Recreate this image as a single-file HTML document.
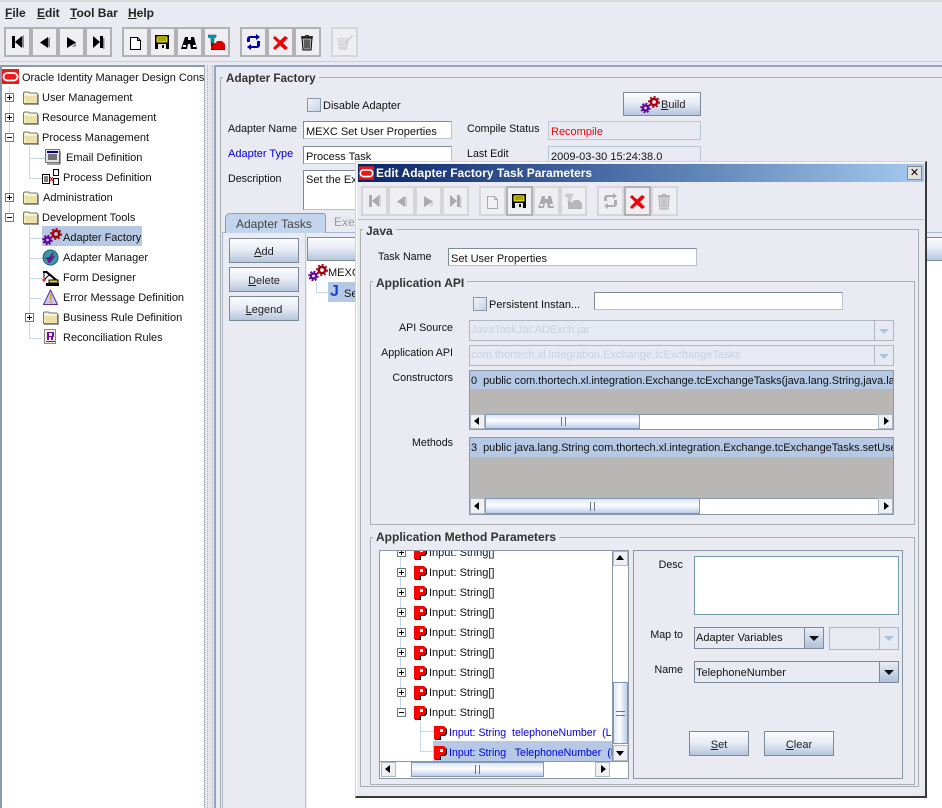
<!DOCTYPE html>
<html><head><meta charset="utf-8"><title>Edit Adapter Factory Task Parameters</title>
<style>
html,body{margin:0;padding:0;width:942px;height:808px;overflow:hidden;background:#eaeaf2}
body{position:relative;font:11px "Liberation Sans",sans-serif;color:#111}
div,span,svg{position:absolute;box-sizing:border-box}
u{text-decoration:underline}
.t{white-space:nowrap;line-height:14px}
.l{font-size:10.7px}
.r{text-align:right}
.m{font-weight:bold;font-size:12px;color:#222;top:6px;line-height:14px}
.tb{width:27px;height:30px;border:2px solid #b2b2b4;background:#eeeef3}
.tb svg{left:3px;top:3px;width:17px;height:20px}
.off svg{opacity:.28;filter:grayscale(1)}
.off{border-color:#d6d6da}
.g{border:1px solid #a9b0b0}
.gl{font-weight:bold;font-size:12px;color:#333;background:#eaeaf2;padding:0 3px;line-height:14px;white-space:nowrap}
.in{background:#fff;border:1px solid #7d8b99;border-right-color:#b9c2cc;border-bottom-color:#b9c2cc;padding:3px 0 0 2px;line-height:14px;white-space:nowrap;overflow:hidden}
.ro{background:#e8eaf3;border:1px solid #b8c5d3;padding:3px 0 0 2px;line-height:14px;white-space:nowrap}
.btn{border:1px solid #7c8a98;background:linear-gradient(#fbfcfe 0%,#e8ecf5 45%,#b6c6dc 100%);text-align:center;line-height:26px;color:#222}
.sel{background:#b5c9e4}
.sbt{background:linear-gradient(#dbe6f6,#fcfdff 45%,#bccde8);border:1px solid #7f96bd}
.ar{background:#eef0f6;border:1px solid #b0b8c2}
.cb{width:14px;height:14px;border:1px solid #8a98a8;background:linear-gradient(135deg,#f3f5fa,#c4d2e6)}
.pm{width:9px;height:9px;border:1px solid #777;background:#fff}
.pm:before{content:"";position:absolute;left:1px;top:3px;width:5px;height:1px;background:#000}
.pl:after{content:"";position:absolute;left:3px;top:1px;width:1px;height:5px;background:#000}
.cbx{background:#e8eaf3;border:1px solid #7d8b99}
.cbb{background:linear-gradient(#e8ecf5,#b0c1da);border-left:1px solid #7d8b99;top:0;bottom:0;right:0;width:19px}
.cbb:after{content:"";position:absolute;left:4px;top:8px;border:5px solid transparent;border-top:5px solid #111;border-bottom:0}
.dis{border-color:#b0b7c0}
.dis .cbb{background:#e8eaf3;border-left-color:#b0b7c0}
.dis .cbb:after{border-top-color:#a9c3e3}
.blue{color:#0000e0;font-size:10.6px}
.gd{background:#c3d8ea}
</style></head><body>
<svg width="0" height="0" style="left:0;top:0"><defs>
<symbol id="folder" viewBox="0 0 17 14"><path d="M1.500 3.500V2.500l1-1h4l1 1h7l1 1v9.500h-14z" fill="#f7f1c4" stroke="#77776a"/><path d="M2 5h13v7L4 12.500z" fill="#ebe1a8"/><path d="M2 4.500h13" stroke="#fff"/><path d="M16.500 4v10H2" stroke="#999" fill="none"/></symbol>
<symbol id="gear" viewBox="0 0 20 18"><circle cx="14" cy="6" r="3.200" fill="none" stroke="#a3000f" stroke-width="2.600"/><circle cx="14" cy="6" r="5.200" fill="none" stroke="#a3000f" stroke-width="1.500" stroke-dasharray="2 2"/><circle cx="5.500" cy="12" r="2.600" fill="none" stroke="#660099" stroke-width="2.400"/><circle cx="5.500" cy="12" r="4.500" fill="none" stroke="#660099" stroke-width="1.500" stroke-dasharray="2 1.500"/></symbol>
<symbol id="P" viewBox="0 0 13 14"><path d="M1 1h10l2 2v5l-2 2H7v4H1z" fill="#000"/><path d="M0 0h10l2 2v5l-2 2H6v4H0z" fill="#f00"/><path d="M6 3h3v3H6z" fill="#fff"/></symbol>
<symbol id="first" viewBox="0 0 17 20"><path d="M6 9.500l9-6.500v13z" fill="#888"/><path d="M3 4h3v12H3zM13 4v12L6 10z" fill="#000"/></symbol>
<symbol id="prev" viewBox="0 0 17 20"><path d="M7 10.500l7-5.500v11z" fill="#888"/><path d="M12 5v11L4 10.500z" fill="#000"/></symbol>
<symbol id="next" viewBox="0 0 17 20"><path d="M4 5v11l9-5.500z" fill="#000"/><path d="M9 15l4-4.500v4z" fill="#888"/></symbol>
<symbol id="last" viewBox="0 0 17 20"><path d="M3 4v12l7-6zM10 4h3v12h-3z" fill="#000"/><path d="M13 6h1.500v11H13z" fill="#888"/></symbol>
<symbol id="new" viewBox="0 0 17 20"><path d="M3.500 5.500h7l3 3v9h-10z" fill="#fff" stroke="#000"/><path d="M10.500 5.500v3h3" fill="none" stroke="#000"/></symbol>
<symbol id="save" viewBox="0 0 17 20"><path d="M1 3h14v14H1z" fill="#000"/><path d="M2.500 4.500h11v6h-11z" fill="#d8cc10"/><path d="M4 4h8v5H4z" fill="#a8a400"/><path d="M4 12h8v5H4z" fill="#e8e8e8"/><path d="M8 13h2v3H8z" fill="#000"/></symbol>
<symbol id="bino" viewBox="0 0 17 20"><path d="M4 5h3v3h3V5h3l3 12h-6l-1-5H7l-1 5H0z" fill="#000"/><path d="M2 13h3v2H2zM12 13h3v2h-3z" fill="#fff"/></symbol>
<symbol id="pin" viewBox="0 0 17 20"><path d="M3 11h5l1-2h5l3 3v6H3z" fill="#e00000"/><path d="M3 17h14v1H3z" fill="#600"/><path d="M0 3h8v2L6 6v4l-1 1H3V6L0 5z" fill="#00a0a8" stroke="#005060" stroke-width=".6"/><path d="M3.500 11h1v3h-1z" fill="#000"/></symbol>
<symbol id="ref" viewBox="0 0 17 20"><path d="M2 10V6l2-2h7V2l4 3-4 3V6H5v4z" fill="#0000b0"/><path d="M15 9v5l-2 2H6v2l-4-3 4-3v2h6V9z" fill="#0000b0"/></symbol>
<symbol id="x" viewBox="0 0 17 20"><path d="M1 6l2-2 5 4.500L13 4l3 2-5 5 5 5-3 2-5-4.500L3 18l-2-2 5-5z" fill="#f00000"/></symbol>
<symbol id="trash" viewBox="0 0 17 20"><path d="M3 6h10l-1 12H4z" fill="#b8b8b8" stroke="#000"/><path d="M2 4h12v1.500H2zM6 3h4v1H6z" fill="#333"/><path d="M6 7.500v9M8 7.500v9M10 7.500v9" stroke="#000"/></symbol>
<symbol id="note" viewBox="0 0 17 20"><path d="M1 6h12l-2 12H3z" fill="#999"/><path d="M2 8h9M2 11h9M3 14h7" stroke="#ddd"/><path d="M9 11l7-8 1 1-7 8z" fill="#777"/></symbol>
<symbol id="oracle" viewBox="0 0 17 15"><path d="M0 0h17v15H0z" fill="#e81b1b"/><rect x="1.500" y="4" width="14" height="7.500" rx="3.700" fill="none" stroke="#fff" stroke-width="1.800"/></symbol>
</defs></svg>

<!-- menu -->
<div style="left:0;top:0;width:942px;height:2px;background:#d8d8db"></div>
<div class="m t" style="left:5px"><u>F</u>ile</div>
<div class="m t" style="left:37px"><u>E</u>dit</div>
<div class="m t" style="left:70px"><u>T</u>ool Bar</div>
<div class="m t" style="left:128px"><u>H</u>elp</div>

<!-- toolbar -->
<div class="tb" style="left:4px;top:27px"><svg><use href="#first"/></svg></div>
<div class="tb" style="left:31px;top:27px"><svg><use href="#prev"/></svg></div>
<div class="tb" style="left:58px;top:27px"><svg><use href="#next"/></svg></div>
<div class="tb" style="left:85px;top:27px"><svg><use href="#last"/></svg></div>
<div class="tb" style="left:122px;top:27px"><svg><use href="#new"/></svg></div>
<div class="tb" style="left:149px;top:27px"><svg><use href="#save"/></svg></div>
<div class="tb" style="left:176px;top:27px"><svg><use href="#bino"/></svg></div>
<div class="tb" style="left:203px;top:27px"><svg><use href="#pin"/></svg></div>
<div class="tb" style="left:240px;top:27px"><svg><use href="#ref"/></svg></div>
<div class="tb" style="left:267px;top:27px"><svg><use href="#x"/></svg></div>
<div class="tb" style="left:294px;top:27px"><svg><use href="#trash"/></svg></div>
<div class="tb off" style="left:331px;top:27px"><svg><use href="#note"/></svg></div>
<div style="left:0;top:61px;width:942px;height:1px;background:#cfcfd3"></div>

<!-- left tree -->
<div style="left:0;top:65px;width:205px;height:743px;background:#fff;border-top:2px solid #8c9bac;border-left:2px solid #8c9bac;border-right:1px solid #a8b1b9"></div>
<div style="left:0;top:1px">
<div class="gd" style="left:9px;top:85px;width:1px;height:135px"></div>
<div class="gd" style="left:29px;top:145px;width:1px;height:33px"></div>
<div class="gd" style="left:29px;top:225px;width:1px;height:113px"></div>
<div class="gd" style="left:29px;top:157px;width:16px;height:1px"></div>
<div class="gd" style="left:29px;top:177px;width:13px;height:1px"></div>
<div class="gd" style="left:29px;top:237px;width:13px;height:1px"></div>
<div class="gd" style="left:29px;top:257px;width:13px;height:1px"></div>
<div class="gd" style="left:29px;top:277px;width:13px;height:1px"></div>
<div class="gd" style="left:29px;top:297px;width:13px;height:1px"></div>
<div class="gd" style="left:29px;top:337px;width:13px;height:1px"></div>
<svg style="left:2px;top:68px" width="17" height="15"><use href="#oracle"/></svg>
<div style="left:22px;top:70px;width:182px;height:14px;overflow:hidden;letter-spacing:-.03px" class="t">Oracle Identity Manager Design Console</div>

<div class="pm pl" style="left:5px;top:92px"></div><svg style="left:22px;top:89px" width="17" height="15"><use href="#folder"/></svg><div class="t" style="left:42px;top:90px">User Management</div>
<div class="pm pl" style="left:5px;top:112px"></div><svg style="left:22px;top:109px" width="17" height="15"><use href="#folder"/></svg><div class="t" style="left:42px;top:110px">Resource Management</div>
<div class="pm" style="left:5px;top:132px"></div><svg style="left:22px;top:129px" width="17" height="15"><use href="#folder"/></svg><div class="t" style="left:42px;top:130px">Process Management</div>
<svg style="left:45px;top:148px" width="16" height="16"><path d="M.5 .5h14v13H.5z" fill="#e4e4e4" stroke="#777"/><path d="M2 2h11v2H2z" fill="#000090"/><path d="M3 6h9M3 8h9M3 10h9" stroke="#000"/><path d="M15 2v13H2" stroke="#444" fill="none"/></svg><div class="t" style="left:66px;top:150px">Email Definition</div>
<svg style="left:42px;top:168px" width="18" height="17"><path d="M.5 5.500h7v9h-7z" fill="#fff" stroke="#000"/><path d="M2 8h4M2 10h4M2 12h4" stroke="#000"/><path d="M11.500 .5h5v6h-5zM11.500 9.500h5v6h-5z" fill="#fff" stroke="#000"/><path d="M8 8l3 4M8 12l3-4" stroke="#d00"/></svg><div class="t" style="left:63px;top:170px">Process Definition</div>
<div class="pm pl" style="left:5px;top:192px"></div><svg style="left:22px;top:189px" width="17" height="15"><use href="#folder"/></svg><div class="t" style="left:43px;top:190px">Administration</div>
<div class="pm" style="left:5px;top:212px"></div><svg style="left:22px;top:209px" width="17" height="15"><use href="#folder"/></svg><div class="t" style="left:42px;top:210px">Development Tools</div>

<div class="sel" style="left:42px;top:225px;width:100px;height:20px"></div>
<svg style="left:42px;top:227px" width="20" height="18"><use href="#gear"/></svg><div class="t" style="left:63px;top:230px">Adapter Factory</div>
<svg style="left:42px;top:248px" width="17" height="17"><circle cx="8.500" cy="8.500" r="7.500" fill="#3a9aa0" stroke="#1a5a70"/><path d="M2 9l5-1 4-5 1 1-2 4 4-2-5 7-3 1-1-4z" fill="#6a1a90"/></svg><div class="t" style="left:63px;top:250px">Adapter Manager</div>
<svg style="left:42px;top:268px" width="19" height="18"><path d="M1 2h4l12 10-2 1L4 4H1z" fill="#000"/><path d="M8 5l-5 5M2 3v9" stroke="#000" fill="none"/><path d="M7 11h9v3H7z" fill="#e8d820" stroke="#000"/><path d="M4 14h13v3H4z" fill="#000"/><path d="M0 11h4M2 9v4" stroke="#c00"/></svg><div class="t" style="left:63px;top:270px">Form Designer</div>
<svg style="left:43px;top:288px" width="15" height="17"><path d="M7.500 1L14.500 15.500H.5z" fill="#c8c0f0" stroke="#5030a0"/><path d="M7 5h1.500v6H7zM7 12h1.500v2H7z" fill="#d8a000"/></svg><div class="t" style="left:63px;top:290px">Error Message Definition</div>
<div class="pm pl" style="left:25px;top:312px"></div><svg style="left:42px;top:309px" width="17" height="15"><use href="#folder"/></svg><div class="t" style="left:63px;top:310px">Business Rule Definition</div>
<svg style="left:44px;top:328px" width="13" height="17"><path d="M.5 .5h11v14H.5z" fill="#f3f0e0" stroke="#888"/><path d="M3 3h6v1H3zM3 3h2v8H3zM8 3h2v4H8zM3 7h7v1H3zM7 8h2v3H7zM2 12h9v1H2z" fill="#7010a0"/></svg><div class="t" style="left:63px;top:330px">Reconciliation Rules</div>
</div>

<!-- divider -->
<div style="left:207px;top:65px;width:6px;height:743px;background:#e6e6ec;border-left:1px dotted #a5b4b9;border-right:1px dotted #a5b4b9"></div>

<!-- main panel -->
<div style="left:214px;top:65px;width:728px;height:743px;border-top:2px solid #94a3c0;border-left:2px solid #94a3c0;background:#eaeaf2"></div>
<div class="g" style="left:220px;top:77px;width:730px;height:740px"></div>
<div class="gl" style="left:223px;top:72px;font-size:11.7px">Adapter Factory</div>

<div class="cb" style="left:307px;top:98px"></div>
<div class="t" style="left:323px;top:99px">Disable Adapter</div>
<div class="btn" style="left:623px;top:92px;width:78px;height:24px;padding-left:37px;text-align:left;line-height:25px"><svg style="left:16px;top:3px" width="20" height="18"><use href="#gear"/></svg><u>B</u>uild</div>

<div class="t l" style="left:228px;top:122px">Adapter Name</div>
<div class="in" style="left:303px;top:121px;width:149px;height:18px;padding-top:3px">MEXC Set User Properties</div>
<div class="t l" style="left:467px;top:122px">Compile Status</div>
<div class="ro" style="left:548px;top:121px;width:153px;height:19px;padding-top:3px;color:#f00">Recompile</div>
<div class="t blue" style="left:228px;top:147px;font-size:11px">Adapter Type</div>
<div class="in" style="left:303px;top:146px;width:149px;height:18px;padding-top:3px">Process Task</div>
<div class="t l" style="left:467px;top:147px">Last Edit</div>
<div class="ro" style="left:548px;top:146px;width:153px;height:19px;padding-top:3px">2009-03-30 15:24:38.0</div>
<div class="t l" style="left:228px;top:172px">Description</div>
<div class="in" style="left:303px;top:170px;width:60px;height:40px;padding-top:2px">Set the Ex</div>

<!-- tabs -->
<div style="left:222px;top:232px;width:720px;height:576px;border:1px solid #a5b8cd;border-right:0;border-bottom:0"></div>
<div style="left:225px;top:213px;width:101px;height:20px;background:#c3d5ec;border:1px solid #8a9db5;border-bottom:0;border-radius:5px 3px 0 0;color:#444;padding:2px 0 0 10px;font-size:12px;line-height:16px;white-space:nowrap">Adapter Tasks</div>
<div class="t" style="left:334px;top:215px;color:#9a9a9a;font-size:12px">Exe</div>
<div class="btn" style="left:229px;top:238px;width:70px;height:25px"><u>A</u>dd</div>
<div class="btn" style="left:229px;top:267px;width:70px;height:25px"><u>D</u>elete</div>
<div class="btn" style="left:229px;top:296px;width:70px;height:25px"><u>L</u>egend</div>
<div style="left:305px;top:233px;width:1px;height:575px;background:#c0c8d1"></div>
<div class="btn" style="left:307px;top:237px;width:635px;height:24px;border-right:0"></div>
<div style="left:307px;top:261px;width:635px;height:547px;background:#fff"></div>
<svg style="left:308px;top:264px" width="20" height="18"><use href="#gear"/></svg>
<div class="t" style="left:328px;top:266px">MEXC</div>
<div class="gd" style="left:316px;top:282px;width:1px;height:11px"></div>
<div class="gd" style="left:316px;top:292px;width:13px;height:1px"></div>
<div class="sel" style="left:328px;top:282px;width:40px;height:20px"></div>
<div style="left:330px;top:284px;width:13px;height:16px;font:bold 16px/16px 'Liberation Sans',sans-serif;color:#1840d8">J</div>
<div class="t" style="left:344px;top:287px">Set</div>

<!-- dialog -->
<div style="left:355px;top:161px;width:572px;height:637px;background:#eaeaf2;border:1px solid #cfd2d8;border-right:2px solid #3a3a3a;border-bottom:2px solid #3a3a3a;box-shadow:inset 1px 1px 0 #fff"></div>
<div style="left:358px;top:164px;width:566px;height:18px;background:linear-gradient(90deg,#0a246a,#5f86b8 60%,#a6caf0)"></div>
<svg style="left:359px;top:165px" width="15" height="16"><use href="#oracle"/></svg>
<div class="t" style="left:376px;top:166px;color:#fff;font-weight:bold;font-size:12px">Edit Adapter Factory Task Parameters</div>
<div style="left:907px;top:166px;width:15px;height:14px;background:#e4e2de;border:1px solid #888;font:11px/12px 'Liberation Sans',sans-serif;text-align:center;color:#000">✕</div>

<div class="tb off" style="left:361px;top:186px"><svg><use href="#first"/></svg></div>
<div class="tb off" style="left:388px;top:186px"><svg><use href="#prev"/></svg></div>
<div class="tb off" style="left:415px;top:186px"><svg><use href="#next"/></svg></div>
<div class="tb off" style="left:442px;top:186px"><svg><use href="#last"/></svg></div>
<div class="tb off" style="left:479px;top:186px"><svg><use href="#new"/></svg></div>
<div class="tb" style="left:506px;top:186px;"><svg><use href="#save"/></svg></div>
<div class="tb off" style="left:533px;top:186px"><svg><use href="#bino"/></svg></div>
<div class="tb off" style="left:560px;top:186px"><svg><use href="#pin"/></svg></div>
<div class="tb off" style="left:597px;top:186px"><svg><use href="#ref"/></svg></div>
<div class="tb" style="left:624px;top:186px"><svg><use href="#x"/></svg></div>
<div class="tb off" style="left:651px;top:186px"><svg><use href="#trash"/></svg></div>
<div style="left:358px;top:219px;width:566px;height:1px;background:#bcbcc1"></div>

<div class="g" style="left:360px;top:229px;width:559px;height:558px"></div>
<div class="gl" style="left:363px;top:224px">Java</div>
<div class="t l" style="left:378px;top:250px">Task Name</div>
<div class="in" style="left:448px;top:248px;width:249px;height:18px;padding-top:3px">Set User Properties</div>

<div class="g" style="left:370px;top:281px;width:545px;height:244px"></div>
<div class="gl" style="left:373px;top:276px">Application API</div>
<div class="cb" style="left:473px;top:297px"></div>
<div class="t" style="left:489px;top:298px">Persistent Instan...</div>
<div class="in" style="left:594px;top:292px;width:249px;height:18px"></div>

<div class="t r l" style="left:370px;width:83px;top:321px">API Source</div>
<div class="cbx dis" style="left:469px;top:320px;width:425px;height:21px;color:#c6d1e0;padding:2px 0 0 1px;line-height:14px">JavaTaskJar.ADExch.jar<div class="cbb"></div></div>
<div class="t r l" style="left:370px;width:83px;top:346px">Application API</div>
<div class="cbx dis" style="left:469px;top:345px;width:425px;height:21px;color:#c6d1e0;padding:2px 0 0 1px;line-height:14px">com.thortech.xl.integration.Exchange.tcExchangeTasks<div class="cbb"></div></div>

<div class="t r l" style="left:370px;width:83px;top:371px">Constructors</div>
<div style="left:469px;top:370px;width:425px;height:60px;background:#b9b6b6;border:1px solid #8a97a5;overflow:hidden">
<div class="sel t" style="left:0;top:0;width:425px;height:18px;padding:3px 0 0 1px;letter-spacing:-.05px">0&nbsp; public com.thortech.xl.integration.Exchange.tcExchangeTasks(java.lang.String,java.lang.String</div>
<div style="left:0;top:43px;width:424px;height:15px;background:#fff;border-top:1px solid #8a97a5"></div>
<div class="ar" style="left:0;top:43px;width:15px;height:15px"></div><div style="left:4px;top:46px;border:4px solid transparent;border-right:5px solid #000;border-left:0"></div>
<div class="sbt" style="left:15px;top:43px;width:155px;height:15px"></div><div style="left:91px;top:46px;width:5px;height:9px;border-left:1px solid #678;border-right:1px solid #678"></div>
<div class="ar" style="left:408px;top:43px;width:15px;height:15px"></div><div style="left:414px;top:46px;border:4px solid transparent;border-left:5px solid #000;border-right:0"></div>
</div>

<div class="t r l" style="left:370px;width:83px;top:436px">Methods</div>
<div style="left:469px;top:437px;width:425px;height:78px;background:#b9b6b6;border:1px solid #8a97a5;overflow:hidden">
<div class="sel t" style="left:0;top:0;width:425px;height:19px;padding:3px 0 0 1px;letter-spacing:-.05px">3&nbsp; public java.lang.String com.thortech.xl.integration.Exchange.tcExchangeTasks.setUserProperties</div>
<div style="left:0;top:60px;width:424px;height:16px;background:#fff;border-top:1px solid #8a97a5"></div>
<div class="ar" style="left:0;top:60px;width:15px;height:16px"></div><div style="left:4px;top:64px;border:4px solid transparent;border-right:5px solid #000;border-left:0"></div>
<div class="sbt" style="left:15px;top:60px;width:215px;height:16px"></div><div style="left:120px;top:64px;width:5px;height:9px;border-left:1px solid #678;border-right:1px solid #678"></div>
<div class="ar" style="left:408px;top:60px;width:15px;height:16px"></div><div style="left:414px;top:64px;border:4px solid transparent;border-left:5px solid #000;border-right:0"></div>
</div>

<div class="g" style="left:370px;top:537px;width:545px;height:248px"></div>
<div class="gl" style="left:373px;top:530px">Application Method Parameters</div>

<!-- method tree -->
<div style="left:379px;top:550px;width:250px;height:229px;background:#fff;border:1px solid #8a97a5;overflow:hidden">
<div class="gd" style="left:20px;top:0;width:1px;height:160px"></div>
<div class="gd" style="left:40px;top:170px;width:1px;height:31px"></div>
<div class="gd" style="left:40px;top:180px;width:14px;height:1px"></div>
<div class="gd" style="left:40px;top:200px;width:14px;height:1px"></div>
<div class="pm pl" style="left:17px;top:-3px"></div><svg style="left:34px;top:-5px" width="13" height="14"><use href="#P"/></svg><div class="t" style="left:49px;top:-5px">Input: String[]</div>
<div class="pm pl" style="left:17px;top:17px"></div><svg style="left:34px;top:15px" width="13" height="14"><use href="#P"/></svg><div class="t" style="left:49px;top:15px">Input: String[]</div>
<div class="pm pl" style="left:17px;top:37px"></div><svg style="left:34px;top:35px" width="13" height="14"><use href="#P"/></svg><div class="t" style="left:49px;top:35px">Input: String[]</div>
<div class="pm pl" style="left:17px;top:57px"></div><svg style="left:34px;top:55px" width="13" height="14"><use href="#P"/></svg><div class="t" style="left:49px;top:55px">Input: String[]</div>
<div class="pm pl" style="left:17px;top:77px"></div><svg style="left:34px;top:75px" width="13" height="14"><use href="#P"/></svg><div class="t" style="left:49px;top:75px">Input: String[]</div>
<div class="pm pl" style="left:17px;top:97px"></div><svg style="left:34px;top:95px" width="13" height="14"><use href="#P"/></svg><div class="t" style="left:49px;top:95px">Input: String[]</div>
<div class="pm pl" style="left:17px;top:117px"></div><svg style="left:34px;top:115px" width="13" height="14"><use href="#P"/></svg><div class="t" style="left:49px;top:115px">Input: String[]</div>
<div class="pm pl" style="left:17px;top:137px"></div><svg style="left:34px;top:135px" width="13" height="14"><use href="#P"/></svg><div class="t" style="left:49px;top:135px">Input: String[]</div>
<div class="pm" style="left:17px;top:157px"></div><svg style="left:34px;top:155px" width="13" height="14"><use href="#P"/></svg><div class="t" style="left:49px;top:155px">Input: String[]</div>
<svg style="left:54px;top:175px" width="13" height="14"><use href="#P"/></svg><div class="t blue" style="left:69px;top:175px">Input: String&nbsp; telephoneNumber&nbsp; (Lo</div>
<div class="sel" style="left:53px;top:190px;width:180px;height:20px"></div>
<svg style="left:54px;top:195px" width="13" height="14"><use href="#P"/></svg><div class="t blue" style="left:69px;top:195px;width:164px;overflow:hidden">Input: String&nbsp;&nbsp; TelephoneNumber&nbsp; (L</div>

<div style="left:232px;top:0;width:16px;height:210px;background:#fff;border-left:1px solid #8a97a5"></div>
<div class="ar" style="left:233px;top:0;width:15px;height:15px"></div><div style="left:236px;top:4px;border:4px solid transparent;border-bottom:5px solid #000;border-top:0"></div>
<div class="sbt" style="left:233px;top:131px;width:15px;height:62px;background:linear-gradient(90deg,#dbe6f6,#fcfdff 45%,#bccde8)"></div><div style="left:236px;top:160px;width:9px;height:5px;border-top:1px solid #678;border-bottom:1px solid #678"></div>
<div class="ar" style="left:233px;top:194px;width:15px;height:16px"></div><div style="left:236px;top:200px;border:4px solid transparent;border-top:5px solid #000;border-bottom:0"></div>

<div style="left:0;top:210px;width:248px;height:17px;background:#fff;border-top:1px solid #8a97a5"></div>
<div class="ar" style="left:1px;top:211px;width:15px;height:15px"></div><div style="left:5px;top:214px;border:4px solid transparent;border-right:5px solid #000;border-left:0"></div>
<div class="sbt" style="left:31px;top:211px;width:133px;height:15px"></div><div style="left:95px;top:214px;width:5px;height:9px;border-left:1px solid #678;border-right:1px solid #678"></div>
<div class="ar" style="left:215px;top:211px;width:15px;height:15px"></div><div style="left:221px;top:214px;border:4px solid transparent;border-left:5px solid #000;border-right:0"></div>
</div>

<!-- right pane -->
<div class="g" style="left:633px;top:550px;width:270px;height:229px;border-color:#8a97a5"></div>
<div class="t r l" style="left:640px;width:43px;top:558px">Desc</div>
<div class="in" style="left:694px;top:556px;width:205px;height:59px;border-color:#6f9aa8"></div>
<div class="t r l" style="left:640px;width:43px;top:628px">Map to</div>
<div class="cbx" style="left:694px;top:627px;width:130px;height:22px;padding:3px 0 0 1px;line-height:14px;color:#111">Adapter Variables<div class="cbb"></div></div>
<div class="cbx dis" style="left:829px;top:627px;width:70px;height:23px"><div class="cbb"></div></div>
<div class="t r l" style="left:640px;width:43px;top:663px">Name</div>
<div class="cbx" style="left:694px;top:661px;width:205px;height:22px;padding:4px 0 0 1px;line-height:14px;color:#111">TelephoneNumber<div class="cbb"></div></div>
<div class="btn" style="left:689px;top:731px;width:60px;height:25px"><u>S</u>et</div>
<div class="btn" style="left:764px;top:731px;width:70px;height:25px"><u>C</u>lear</div>
</body></html>
